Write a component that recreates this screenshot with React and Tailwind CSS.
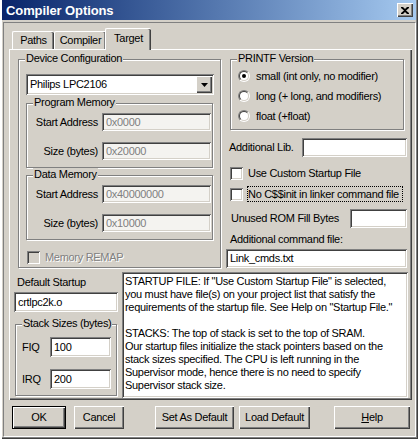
import React from 'react';

const sunken = 'shadow-[inset_1px_1px_0_#808080,inset_-1px_-1px_0_#fff,inset_2px_2px_0_#404040,inset_-2px_-2px_0_#d4d0c8]';
const raised = 'shadow-[inset_1px_1px_0_#fff,inset_-1px_-1px_0_#404040,inset_-2px_-2px_0_#808080]';

function Group({ label, className = '', children }) {
  return (
    <div className={`relative shrink-0 border border-[#808080] shadow-[1px_1px_0_#fff,inset_1px_1px_0_#fff] ${className}`}>
      <span className="absolute -top-[8px] left-[6px] px-[1px] bg-[#d4d0c8] whitespace-nowrap">{label}</span>
      {children}
    </div>
  );
}

function Field({ value, className = '', disabled }) {
  return (
    <div
      className={`shrink-0 flex items-center pl-[4px] whitespace-nowrap ${sunken} ${
        disabled ? 'bg-[#f4f3f0] text-[#808080]' : 'bg-white'
      } ${className}`}
    >
      {value}
    </div>
  );
}

function Check({ disabled }) {
  return <div className={`w-[13px] h-[13px] shrink-0 ${sunken} ${disabled ? 'bg-[#d4d0c8]' : 'bg-white'}`} />;
}

function Radio({ checked }) {
  return (
    <div className="w-[12px] h-[12px] shrink-0 rounded-full border border-t-[#808080] border-l-[#808080] border-r-white border-b-white">
      <div className="w-full h-full rounded-full border border-t-[#404040] border-l-[#404040] border-r-[#d4d0c8] border-b-[#d4d0c8] bg-white flex items-center justify-center">
        {checked && <div className="w-[4px] h-[4px] rounded-full bg-black" />}
      </div>
    </div>
  );
}

function Btn({ children, className = '' }) {
  return (
    <div className={`h-[23px] shrink-0 flex items-center justify-center bg-[#d4d0c8] ${raised} ${className}`}>
      {children}
    </div>
  );
}

function MemoryGroup({ label, start, size }) {
  return (
    <Group label={label} className="ml-[7px] w-[187px] h-[65px]">
      <div className="flex items-center mt-[9px]">
        <span className="w-[71px] text-right">Start Address</span>
        <Field value={start} disabled className="ml-[4px] w-[109px] h-[18px]" />
      </div>
      <div className="flex items-center mt-[11px]">
        <span className="w-[71px] text-right">Size (bytes)</span>
        <Field value={size} disabled className="ml-[4px] w-[109px] h-[18px]" />
      </div>
    </Group>
  );
}

export default function App() {
  return (
    <div className="w-[418px] h-[439px] overflow-hidden flex flex-col bg-[#d4d0c8] text-black text-[11px] leading-[13px] tracking-[-0.3px] font-['Liberation_Sans',Arial,sans-serif] shadow-[inset_2px_0_0_#fff,inset_1px_0_0_#d4d0c8,inset_-1px_-1px_0_#404040,inset_-2px_-2px_0_#808080]">
      {/* Title bar */}
      <div className="h-[20px] mx-[2px] shrink-0 flex items-center justify-between pl-[4px] pr-[3px] bg-linear-to-r from-[#0a246a] to-[#a6caf0]">
        <span className="text-white font-bold text-[13px] tracking-[-0.1px]">Compiler Options</span>
        <div className={`w-[16px] h-[14px] flex items-center justify-center bg-[#d4d0c8] ${raised}`}>
          <svg width="8" height="7" viewBox="0 0 8 7">
            <path d="M0 0h2l2 2 2-2h2v1L5 3.5 8 6v1H6L4 5 2 7H0V6l3-2.5L0 1z" fill="#000" />
          </svg>
        </div>
      </div>

      {/* Inner frame */}
      <div className="mt-[2px] ml-[3px] mr-[2px] h-[415px] shrink-0 border border-t-[#808080] border-l-[#808080] border-r-white border-b-white flex flex-col">
        {/* Tabs */}
        <div className="mt-[5px] ml-[8px] h-[21px] flex items-end">
          <div className="w-[42px] h-[18px] flex items-center justify-center rounded-t-[2px] border-t border-l border-white shadow-[inset_-1px_0_0_#404040,inset_-2px_0_0_#808080]">
            Paths
          </div>
          <div className="w-[52px] h-[18px] flex items-center justify-center rounded-t-[2px] border-t border-l border-white shadow-[inset_-1px_0_0_#404040,inset_-2px_0_0_#808080]">
            Compiler
          </div>
          <div className="relative z-10 -ml-[1px] -mb-[1px] w-[46px] h-[22px] pb-[3px] flex items-center justify-center bg-[#d4d0c8] rounded-t-[2px] border-t border-l border-white shadow-[inset_-1px_0_0_#404040,inset_-2px_0_0_#808080]">
            Target
          </div>
        </div>

        {/* Tab page */}
        <div className="ml-[5px] w-[403px] h-[351px] shrink-0 flex flex-col border-t border-l border-white shadow-[inset_-1px_-1px_0_#404040,inset_-2px_-2px_0_#808080]">
          <div className="flex mt-[9px]">
            {/* Device configuration */}
            <Group label="Device Configuration" className="ml-[8px] w-[203px] h-[209px] flex flex-col">
              <div className={`ml-[7px] mt-[14px] w-[188px] h-[21px] shrink-0 flex items-center justify-between bg-white pl-[4px] pr-[2px] ${sunken}`}>
                <span>Philips LPC2106</span>
                <div className={`w-[16px] h-[17px] flex items-center justify-center bg-[#d4d0c8] ${raised}`}>
                  <svg width="7" height="4" viewBox="0 0 7 4">
                    <path d="M0 0h7L3.5 4z" fill="#000" />
                  </svg>
                </div>
              </div>
              <div className="mt-[8px]">
                <MemoryGroup label="Program Memory" start="0x0000" size="0x20000" />
              </div>
              <div className="mt-[7px]">
                <MemoryGroup label="Data Memory" start="0x40000000" size="0x10000" />
              </div>
              <div className="flex items-center mt-[11px] ml-[8px]">
                <Check disabled />
                <span className="ml-[5px] text-[#808080] [text-shadow:1px_1px_0_#fff]">Memory REMAP</span>
              </div>
            </Group>

            {/* Right column */}
            <div className="ml-[8px] w-[178px] flex flex-col">
              <Group label="PRINTF Version" className="ml-[1px] w-[174px] h-[71px]">
                <div className="flex flex-col gap-[8px] mt-[10px] ml-[7px]">
                  <div className="flex items-center h-[12px]">
                    <Radio checked />
                    <span className="ml-[6px]">small (int only, no modifier)</span>
                  </div>
                  <div className="flex items-center h-[12px]">
                    <Radio />
                    <span className="ml-[6px]">long (+ long, and modifiers)</span>
                  </div>
                  <div className="flex items-center h-[12px]">
                    <Radio />
                    <span className="ml-[6px]">float (+float)</span>
                  </div>
                </div>
              </Group>

              <div className="flex items-center justify-between mt-[8px]">
                <span>Additional Lib.</span>
                <Field value="" className="w-[105px] h-[19px]" />
              </div>

              <div className="flex items-center mt-[10px] ml-[1px]">
                <Check />
                <span className="ml-[5px]">Use Custom Startup File</span>
              </div>
              <div className="flex items-center mt-[6px] ml-[1px] h-[16px]">
                <Check />
                <span className="ml-[4px] h-[16px] w-[156px] flex items-center border border-dotted border-black whitespace-nowrap">
                  No C$$init in linker command file
                </span>
              </div>

              <div className="flex items-center justify-between mt-[7px] ml-[2px]">
                <span>Unused ROM Fill Bytes</span>
                <Field value="" className="w-[57px] h-[19px]" />
              </div>

              <span className="mt-[5px] ml-[1px]">Additional command file:</span>
              <Field value="Link_cmds.txt" className="mt-[3px] -ml-[3px] w-[181px] h-[19px] pl-[3px]" />
            </div>
          </div>

          <div className="flex">
            {/* Startup + stacks */}
            <div className="ml-[4px] w-[104px] flex flex-col">
              <span className="mt-[8px] ml-[3px]">Default Startup</span>
              <Field value="crtlpc2k.o" className="mt-[3px] w-[104px] h-[20px] pl-[3px]" />
              <Group label="Stack Sizes (bytes)" className="mt-[12px] ml-[1px] w-[102px] h-[72px]">
                <div className="flex items-center mt-[12px] ml-[6px]">
                  <span className="w-[28px]">FIQ</span>
                  <Field value="100" className="w-[61px] h-[20px] pl-[3px]" />
                </div>
                <div className="flex items-center mt-[12px] ml-[6px]">
                  <span className="w-[28px]">IRQ</span>
                  <Field value="200" className="w-[61px] h-[20px] pl-[3px]" />
                </div>
              </Group>
            </div>

            {/* Info text */}
            <div className={`ml-[4px] mt-[4px] w-[286px] h-[126px] bg-white pt-[3px] pl-[3px] whitespace-pre ${sunken}`}>
              {'STARTUP FILE: If "Use Custom Startup File" is selected,\n' +
                'you must have file(s) on your project list that satisfy the\n' +
                'requirements of the startup file. See Help on "Startup File."\n' +
                '\n' +
                'STACKS: The top of stack is set to the top of SRAM.\n' +
                'Our startup files initialize the stack pointers based on the\n' +
                'stack sizes specified. The CPU is left running in the\n' +
                'Supervisor mode, hence there is no need to specify\n' +
                'Supervisor stack size.'}
            </div>
          </div>
        </div>

        {/* Buttons */}
        <div className="flex mt-[6px]">
          <div className="ml-[8px] w-[54px] h-[23px] border border-black">
            <Btn className="w-full h-full">OK</Btn>
          </div>
          <Btn className="ml-[8px] w-[50px]">Cancel</Btn>
          <Btn className="ml-[31px] w-[79px]">Set As Default</Btn>
          <Btn className="ml-[5px] w-[71px]">Load Default</Btn>
          <Btn className="ml-[24px] w-[76px]">
            <span>
              <span className="underline">H</span>elp
            </span>
          </Btn>
        </div>
      </div>
    </div>
  );
}
